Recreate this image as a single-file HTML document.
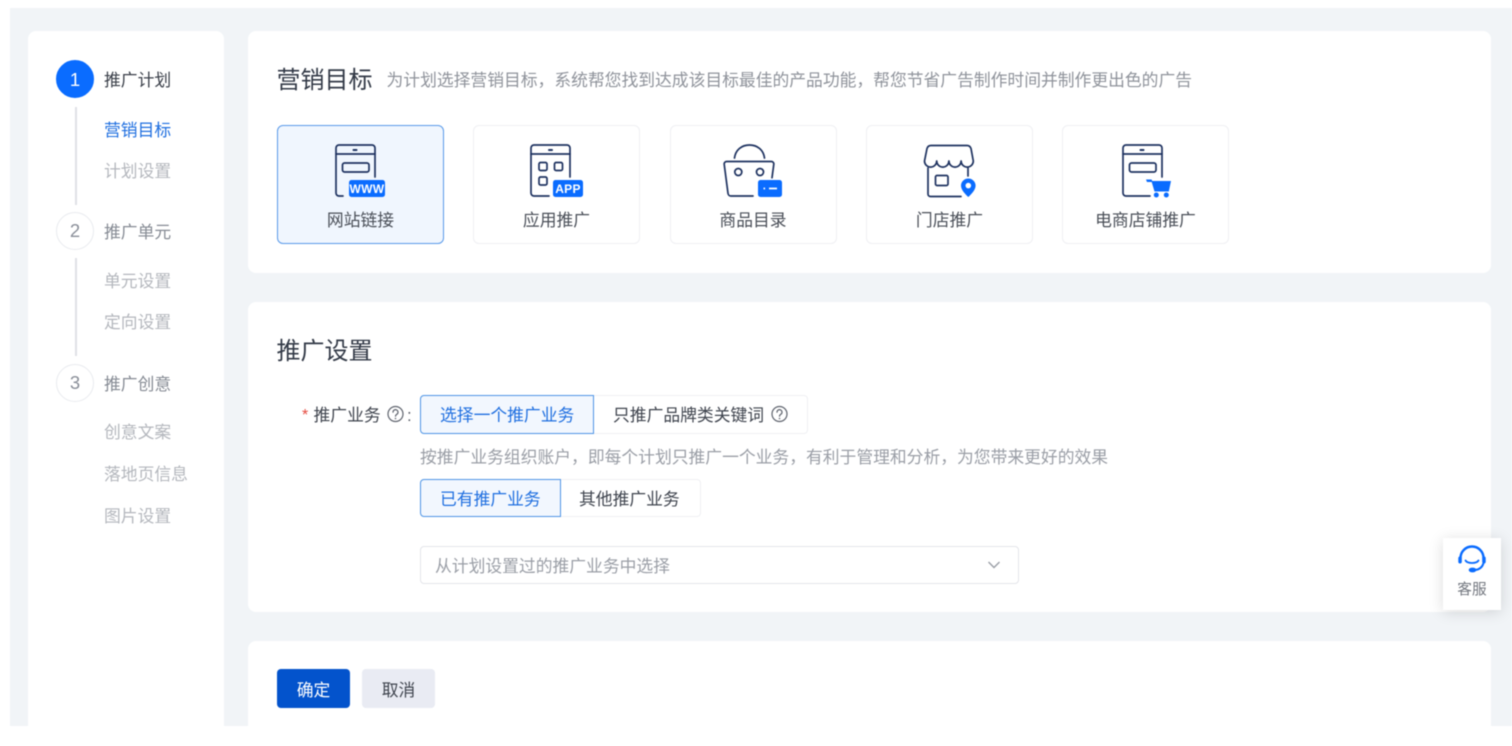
<!DOCTYPE html>
<html lang="zh-CN">
<head>
<meta charset="utf-8">
<title>推广计划</title>
<style>
html,body{margin:0;padding:0;background:#fff;}
body{width:1512px;height:746px;overflow:hidden;position:relative;font-family:"Liberation Sans","Noto Sans CJK SC",sans-serif;font-size:16.8px;color:#333a47;}
#wrap{position:absolute;left:0;top:0;width:1512px;height:746px;filter:blur(.45px);}
.bg{position:absolute;left:10px;top:8px;width:1502px;height:718px;background:#f1f4f7;overflow:hidden;}
.card{position:absolute;background:#fff;border-radius:8px;}
.t{position:absolute;white-space:nowrap;line-height:30px;height:30px;margin-top:1px;z-index:2;}
.c{text-align:center;}
.opt{position:absolute;top:124.5px;width:167px;height:119px;box-sizing:border-box;border:1px solid #eff0f3;border-radius:6px;background:#fff;}
.opt.on{background:#f0f6fe;border-color:#5a9aea;}
.seg{position:absolute;box-sizing:border-box;background:#fff;border:1px solid #eff0f3;}
.seg.on{background:#f2f7fe;border:1px solid #4f95e6;z-index:1;}
.step{position:absolute;left:56px;width:38px;height:38px;box-sizing:border-box;border-radius:50%;text-align:center;line-height:36px;font-size:18.5px;color:#8a8f99;background:#fff;border:1px solid #e9ebef;}
.line{position:absolute;left:75px;width:1.5px;background:#dfe1e6;}
.g{color:#b4b7bd;}
.m{color:#868b94;}
svg{position:absolute;left:0;top:0;z-index:3;}
</style>
</head>
<body>
<div id="wrap">
<div class="bg"></div>

<div class="card" style="left:28px;top:31px;width:196px;height:695px;border-radius:8px 8px 0 0;"></div>
<div class="card" style="left:248px;top:31px;width:1243px;height:242px;"></div>
<div class="card" style="left:248px;top:302px;width:1243px;height:310px;"></div>
<div class="card" style="left:248px;top:641px;width:1243px;height:85px;border-radius:8px 8px 0 0;"></div>

<div class="step" style="top:60px;background:#0a6cff;border-color:#0a6cff;color:#fff;line-height:38px;">1</div>
<div class="line" style="top:107px;height:98px;"></div>
<div class="step" style="top:212px;">2</div>
<div class="line" style="top:258px;height:98px;"></div>
<div class="step" style="top:364px;">3</div>

<div class="t" style="left:104px;top:65px;color:#3a3f49;">推广计划</div>
<div class="t" style="left:104px;top:115px;color:#1f6fe0;">营销目标</div>
<div class="t g" style="left:104px;top:156px;">计划设置</div>
<div class="t m" style="left:104px;top:217px;">推广单元</div>
<div class="t g" style="left:104px;top:266px;">单元设置</div>
<div class="t g" style="left:104px;top:307px;">定向设置</div>
<div class="t m" style="left:104px;top:368.5px;">推广创意</div>
<div class="t g" style="left:104px;top:417px;">创意文案</div>
<div class="t g" style="left:104px;top:459px;">落地页信息</div>
<div class="t g" style="left:104px;top:500.5px;">图片设置</div>

<div class="t" style="left:276.5px;top:65px;font-size:24px;color:#333a47;">营销目标</div>
<div class="t m" style="left:386.5px;top:65px;color:#8f939b;">为计划选择营销目标，系统帮您找到达成该目标最佳的产品功能，帮您节省广告制作时间并制作更出色的广告</div>

<div class="opt on" style="left:276.5px;"></div>
<div class="opt" style="left:473px;"></div>
<div class="opt" style="left:669.5px;"></div>
<div class="opt" style="left:866px;"></div>
<div class="opt" style="left:1062px;"></div>
<div class="t c" style="left:277px;top:205px;width:167px;color:#4a4f58;">网站链接</div>
<div class="t c" style="left:473px;top:205px;width:167px;color:#4a4f58;">应用推广</div>
<div class="t c" style="left:669.5px;top:205px;width:167px;color:#4a4f58;">商品目录</div>
<div class="t c" style="left:866px;top:205px;width:167px;color:#4a4f58;">门店推广</div>
<div class="t c" style="left:1062px;top:205px;width:167px;color:#4a4f58;">电商店铺推广</div>

<div class="t" style="left:276.5px;top:335.5px;font-size:24px;">推广设置</div>

<div class="t" style="left:302px;top:400px;color:#e5483d;font-size:16px;">*</div>
<div class="t" style="left:313.5px;top:400px;color:#3f444e;">推广业务</div>
<div class="t" style="left:407px;top:400px;color:#5b606a;">:</div>

<div class="seg on" style="left:420px;top:395px;width:174px;height:38.5px;border-radius:4px 0 0 4px;"></div>
<div class="seg" style="left:593px;top:395px;width:214.5px;height:38.5px;border-radius:0 4px 4px 0;"></div>
<div class="t" style="left:440px;top:400px;color:#1f6fe0;">选择一个推广业务</div>
<div class="t" style="left:613px;top:400px;color:#3f444e;">只推广品牌类关键词</div>

<div class="t" style="left:420px;top:442px;color:#9a9ea6;">按推广业务组织账户，即每个计划只推广一个业务，有利于管理和分析，为您带来更好的效果</div>

<div class="seg on" style="left:420px;top:479px;width:141px;height:38px;border-radius:4px 0 0 4px;"></div>
<div class="seg" style="left:560px;top:479px;width:140.5px;height:38px;border-radius:0 4px 4px 0;"></div>
<div class="t" style="left:440px;top:484px;color:#1f6fe0;">已有推广业务</div>
<div class="t" style="left:579px;top:484px;color:#3f444e;">其他推广业务</div>

<div style="position:absolute;left:420px;top:546px;width:598.5px;height:37.5px;box-sizing:border-box;border:1px solid #e3e5ea;border-radius:4px;background:#fff;"></div>
<div class="t" style="left:435px;top:550.5px;color:#9a9ea6;">从计划设置过的推广业务中选择</div>

<div style="position:absolute;left:276.5px;top:669px;width:73.5px;height:39px;background:#0353cc;border-radius:4px;"></div>
<div class="t c" style="left:277px;top:674.5px;width:73px;color:#fff;">确定</div>
<div style="position:absolute;left:362px;top:669px;width:73px;height:39px;background:#e9ebf3;border-radius:4px;"></div>
<div class="t c" style="left:362px;top:674.5px;width:73px;color:#3f444e;">取消</div>

<div style="position:absolute;left:1443px;top:538px;width:58px;height:72px;background:#fff;box-shadow:0 2px 14px rgba(0,0,0,.14);z-index:1;"></div>
<div class="t c" style="left:1443px;top:574px;width:58px;font-size:14.7px;color:#73777f;">客服</div>

<svg width="1512" height="746" viewBox="0 0 1512 746" fill="none">
  <!-- website -->
  <g stroke="#1e3260" stroke-width="1.7" stroke-linecap="round" stroke-linejoin="round">
    <path d="M343 196h-4a3 3 0 0 1-3-3V148a3 3 0 0 1 3-3h33a3 3 0 0 1 3 3v29"/>
    <path d="M336 154h39"/>
    <rect x="342.5" y="163" width="26.5" height="9" rx="2"/>
    <path d="M353.5 150h3" stroke-width="2"/>
  </g>
  <rect x="349" y="180" width="36" height="17" rx="2.5" fill="#0a6cff"/>
  <text x="367" y="193" text-anchor="middle" fill="#fff" font-family="Liberation Sans" font-weight="700" font-size="12" letter-spacing=".3">WWW</text>

  <!-- app -->
  <g stroke="#1e3260" stroke-width="1.7" stroke-linecap="round" stroke-linejoin="round">
    <path d="M549 196h-15a3 3 0 0 1-3-3V148a3 3 0 0 1 3-3h33a3 3 0 0 1 3 3v29"/>
    <path d="M531 154h39"/>
    <rect x="539" y="162.5" width="8" height="8" rx="1.6"/>
    <rect x="554.5" y="162.5" width="8" height="8" rx="1.6"/>
    <rect x="539" y="177" width="8" height="8" rx="1.6"/>
    <path d="M549 150h3" stroke-width="2"/>
  </g>
  <rect x="553" y="180" width="30" height="17" rx="2.5" fill="#0a6cff"/>
  <text x="568" y="193" text-anchor="middle" fill="#fff" font-family="Liberation Sans" font-weight="700" font-size="12" letter-spacing=".3">APP</text>

  <!-- bag -->
  <g stroke="#1e3260" stroke-width="1.7" stroke-linecap="round" stroke-linejoin="round">
    <path d="M734.5 158c1-8 7-13 15-13s14 5 15 13"/>
    <path d="M753 196h-22a3 3 0 0 1-3-2.7l-3.8-29a2.5 2.5 0 0 1 2.5-2.8h44.6a2.5 2.5 0 0 1 2.5 2.8l-1.8 13.5"/>
    <circle cx="738.3" cy="172" r="3.5"/>
    <circle cx="760" cy="172" r="3.5"/>
  </g>
  <rect x="758" y="180" width="24" height="17" rx="2.5" fill="#0a6cff"/>
  <path d="M763.5 188.5h1.6M769 188.5h8" stroke="#fff" stroke-width="1.7"/>

  <!-- store -->
  <g stroke="#1e3260" stroke-width="1.7" stroke-linecap="round" stroke-linejoin="round">
    <path d="M932 145.5h35c2 0 3.300 1 4 3l2.300 12.500a6.100 6.100 0 0 1-12.200 0 6.100 6.100 0 0 1-12.200 0 6.100 6.100 0 0 1-12.200 0 6.100 6.100 0 0 1-12.200 0l2.500-12.500c.6-2 2-3 4.100-3z"/>
    <path d="M928 168v26a2.500 2.500 0 0 0 2.500 2.500H961"/>
    <path d="M968 168v8"/>
    <rect x="935.5" y="175.5" width="12.5" height="10" rx="1.5"/>
  </g>
  <path fill-rule="evenodd" d="M968.3 178.500c-4 0-7.300 3.200-7.300 7.100 0 4.400 4.500 8.800 7.300 11.400 2.800-2.600 7.300-7 7.300-11.400 0-3.900-3.300-7.100-7.300-7.100zm0 4.300a2.800 2.800 0 1 1 0 5.600 2.800 2.800 0 0 1 0-5.600z" fill="#0a6cff"/>

  <!-- shop cart -->
  <g stroke="#1e3260" stroke-width="1.7" stroke-linecap="round" stroke-linejoin="round">
    <path d="M1150 196h-24a3 3 0 0 1-3-3V148a3 3 0 0 1 3-3h33a3 3 0 0 1 3 3v29"/>
    <path d="M1123 154h39"/>
    <rect x="1129.5" y="163" width="26.5" height="9" rx="2"/>
    <path d="M1140.5 150h3" stroke-width="2"/>
  </g>
  <path d="M1146 179.500h5.500l.8 1.500h18.700l-2.200 10.500h-14.300l-2.800-9.500h-4.700z" fill="#0a6cff"/>
  <circle cx="1156.3" cy="195" r="2.5" fill="#0a6cff"/>
  <circle cx="1166.3" cy="195" r="2.5" fill="#0a6cff"/>

  <!-- help -->
  <g stroke="#5f646e" stroke-width="1.2" stroke-linecap="round">
    <circle cx="395.5" cy="414" r="7.5"/>
    <path d="M393 412.200a2.500 2.500 0 1 1 3.800 2.100c-.9.600-1.300 1-1.300 1.900"/>
    <circle cx="779.5" cy="414" r="7.5"/>
    <path d="M777 412.200a2.500 2.500 0 1 1 3.800 2.100c-.9.600-1.300 1-1.300 1.900"/>
  </g>
  <circle cx="395.5" cy="418.5" r=".8" fill="#5f646e"/>
  <circle cx="779.5" cy="418.5" r=".8" fill="#5f646e"/>

  <!-- chevron -->
  <path d="M988.5 562l5.500 5.500 5.500-5.500" stroke="#9a9ea6" stroke-width="1.4"/>

  <!-- service -->
  <g transform="translate(0 1)">
    <g stroke="#0a6cff" fill="none" stroke-linecap="round">
      <path d="M1460.5 557a11.500 11.500 0 0 1 23 0" stroke-width="2.4"/>
      <path d="M1465.5 559.500c2 3.300 11 3.300 13 0" stroke-width="1.8"/>
      <path d="M1483.5 562c-1 4-4 6.500-8.500 7" stroke-width="2"/>
    </g>
    <rect x="1458.3" y="555.5" width="3.5" height="7" rx="1.7" fill="#0a6cff"/>
    <rect x="1482.2" y="555.5" width="3.5" height="7" rx="1.7" fill="#0a6cff"/>
    <ellipse cx="1472.5" cy="569" rx="3.8" ry="2.4" fill="#0a6cff"/>
  </g>
</svg>
</div>
</body>
</html>
